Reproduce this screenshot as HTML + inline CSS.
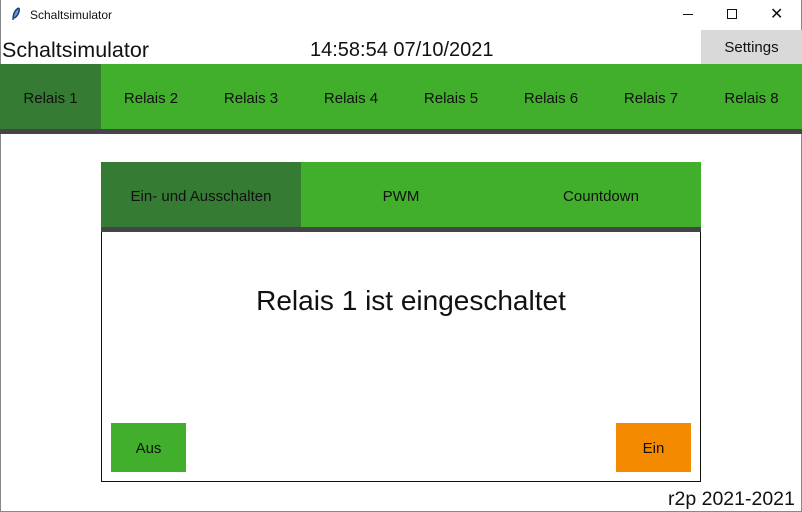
<!DOCTYPE html>
<html><head><style>
*{margin:0;padding:0;box-sizing:border-box}
body{width:802px;height:512px;position:relative;background:#fff;font-family:"Liberation Sans",sans-serif;overflow:hidden;color:#111}
.a{position:absolute}
.c{display:flex;align-items:center;justify-content:center}
</style></head><body>
<div class="a" style="left:0;top:0;width:802px;height:512px;border:1px solid #888;border-top:none"></div>
<svg class="a" style="left:11px;top:7px" width="10" height="14"><path d="M8 1 C3 3 2 8 2 13 M8 1 C9 5 6 10 3 11" stroke="#1e3f7a" stroke-width="1.5" fill="#6a9ad6"/></svg>
<div class="a" style="left:30px;top:8px;font-size:12px">Schaltsimulator</div>
<div class="a" style="left:683px;top:14px;width:10px;height:1px;background:#111"></div>
<div class="a" style="left:727px;top:9px;width:10px;height:10px;border:1px solid #111"></div>
<div class="a" style="left:770px;top:4px;font-size:16px">✕</div>
<div class="a" style="left:2px;top:38px;font-size:21.5px;line-height:24px">Schaltsimulator</div>
<div class="a" style="left:310px;top:39px;font-size:20px;line-height:23px">14:58:54 07/10/2021</div>
<div class="a c" style="left:701px;top:30px;width:101px;height:34px;background:#d9d9d9;font-size:15px">Settings</div>
<div class="a" style="left:0;top:64px;width:802px;height:65px;background:#41ae2c"></div>
<div class="a" style="left:0;top:64px;width:101px;height:65px;background:#367b33"></div>
<div class="a" style="left:0;top:129px;width:802px;height:5px;background:#464349"></div>
<div class="a" style="left:0;top:66px;width:802px;height:65px;display:flex;font-size:15px">
<div class="c" style="width:101px">Relais 1</div><div class="c" style="width:100px">Relais 2</div><div class="c" style="width:100px">Relais 3</div><div class="c" style="width:100px">Relais 4</div><div class="c" style="width:100px">Relais 5</div><div class="c" style="width:100px">Relais 6</div><div class="c" style="width:100px">Relais 7</div><div class="c" style="width:101px">Relais 8</div></div>
<div class="a" style="left:101px;top:162px;width:600px;height:65px;background:#41ae2c"></div>
<div class="a c" style="left:101px;top:164px;width:200px;height:65px;background:#367b33;font-size:15px">Ein- und Ausschalten</div>
<div class="a c" style="left:301px;top:164px;width:200px;height:65px;font-size:15px">PWM</div>
<div class="a c" style="left:501px;top:164px;width:200px;height:65px;font-size:15px">Countdown</div>
<div class="a" style="left:101px;top:162px;width:200px;height:2px;background:#367b33"></div>
<div class="a" style="left:101px;top:227px;width:600px;height:5px;background:#464349"></div>
<div class="a" style="left:101px;top:232px;width:600px;height:250px;border:1px solid #111;border-top:none"></div>
<div class="a c" style="left:101px;top:284px;width:620px;height:34px;font-size:28px">Relais 1 ist eingeschaltet</div>
<div class="a c" style="left:111px;top:423px;width:75px;height:49px;background:#41ae2c;font-size:15px;padding-top:2px">Aus</div>
<div class="a c" style="left:616px;top:423px;width:75px;height:49px;background:#f38a00;font-size:15px;padding-top:2px">Ein</div>
<div class="a" style="left:668px;top:488px;font-size:19.5px;line-height:22px">r2p 2021-2021</div>
</body></html>
